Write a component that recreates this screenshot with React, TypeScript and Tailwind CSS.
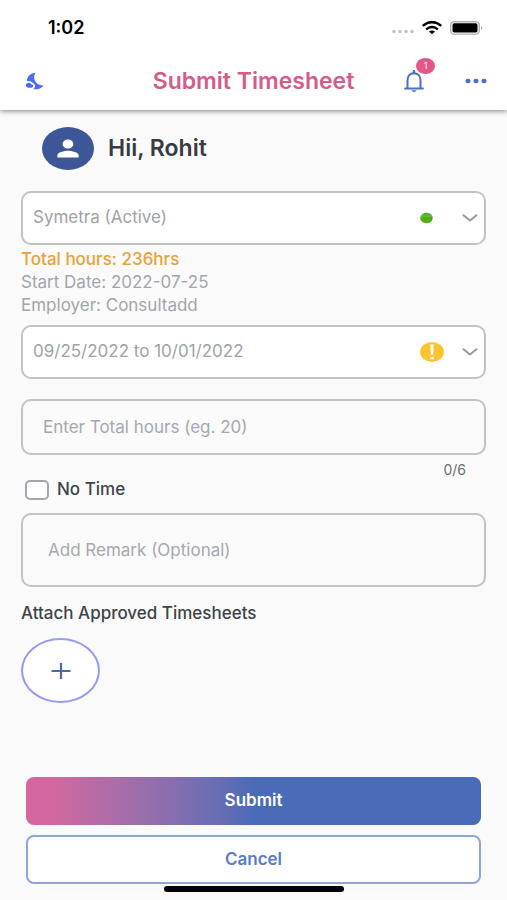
import { useState } from "react"
import { MdNightsStay, MdPerson } from "react-icons/md"

const MAX_HOURS_LENGTH = 6

const StatusBar = () => (
    <div className="flex h-[52px] items-center justify-between pt-1 pr-6 pl-12">
        <span className="text-lg font-semibold text-black">1:02</span>
        <div className="flex items-center gap-2">
            <svg viewBox="0 0 22 12" className="h-3 w-[22px]" fill="#c4c4c6">
                <circle cx="2" cy="9.5" r="1.8" />
                <circle cx="8" cy="9.5" r="1.8" />
                <circle cx="14" cy="9.5" r="1.8" />
                <circle cx="20" cy="9.5" r="1.8" />
            </svg>
            <svg viewBox="0 0 20 14" className="h-[14px] w-5" fill="none" stroke="#000" strokeWidth="2.4">
                <path d="M.8 5C6-.1 14-.1 19.200 5" />
                <path d="M4.2 8.300c3.400-3.100 8.200-3.100 11.600 0" />
                <path d="M7 10.500c1.800-1.500 4.200-1.500 6 0L10 13.200z" fill="#000" stroke="none" />
            </svg>
            <svg viewBox="0 0 33 14" className="h-[14px] w-[33px]">
                <rect x="0.700" y="0.700" width="28.600" height="12.400" rx="3.500" fill="none" stroke="#b0b0b0" strokeWidth="1.400" />
                <rect x="2.500" y="2.300" width="25" height="9.200" rx="1.800" fill="#000" />
                <path d="M31 5c1.400.4 1.400 3.200 0 3.600z" fill="#8a8a8a" />
            </svg>
        </div>
    </div>
)

const BellIcon = () => (
    <svg viewBox="0 0 22 22" className="h-[22px] w-[22px]" fill="none" stroke="#4a6fc4" strokeWidth="2">
        <path d="M4.500 18V10.500C4.500 6 7.200 3.200 11 3.200s6.500 2.800 6.500 7.300V18" />
        <path d="M2 18.500h18" strokeWidth="1.800" strokeLinecap="round" />
        <path d="M11 1v2" strokeWidth="2.400" strokeLinecap="round" />
        <path d="M8.400 20.200h5.200c-.5 1.200-1.400 1.700-2.600 1.700s-2.100-.5-2.600-1.700z" fill="#4a6fc4" stroke="none" />
    </svg>
)

const Header = () => (
    <header className="relative bg-white shadow-[0_1px_5px_rgba(0,0,0,0.5)]">
        <StatusBar />
        <div className="grid h-[58px] grid-cols-[1fr_auto_1fr] items-center px-5">
            <button type="button" aria-label="Dark mode" className="justify-self-start pl-[5px]">
                <MdNightsStay preserveAspectRatio="none" className="h-5 w-[22px] text-[#4d6bf0]" />
            </button>
            <h1 className="text-[23px] font-semibold text-[#d65a8c]">Submit Timesheet</h1>
            <div className="flex items-center gap-10 justify-self-end">
                <button type="button" aria-label="Notifications" className="relative">
                    <BellIcon />
                    <span className="absolute -top-3 left-[13px] flex h-4 w-[19px] items-center justify-center rounded-[50%] bg-[#e4568a] text-[9px] text-white">
                        1
                    </span>
                </button>
                <button type="button" aria-label="More">
                    <svg viewBox="0 0 22 6" className="h-[6px] w-[22px]" fill="#4a6fc4">
                        <ellipse cx="3" cy="3" rx="2.600" ry="2.200" />
                        <ellipse cx="11" cy="3" rx="2.600" ry="2.200" />
                        <ellipse cx="19" cy="3" rx="2.600" ry="2.200" />
                    </svg>
                </button>
            </div>
        </div>
    </header>
)

const Chevron = () => (
    <svg viewBox="0 0 16 8" className="h-2 w-4" fill="none" stroke="#999" strokeWidth="2" strokeLinecap="round" strokeLinejoin="round">
        <path d="M1.500 1.200 8 6.500l6.500-5.300" />
    </svg>
)

const ActiveDot = () => (
    <svg viewBox="0 0 14 12" className="h-3 w-[14px]">
        <defs>
            <linearGradient id="active-dot" x1="0" y1="0" x2="0" y2="1">
                <stop offset="0" stopColor="#3f9a14" />
                <stop offset="0.3" stopColor="#6dbb3e" />
                <stop offset="0.5" stopColor="#49ab12" />
                <stop offset="1" stopColor="#55b81a" />
            </linearGradient>
        </defs>
        <ellipse cx="6.500" cy="6" rx="6.300" ry="5.200" fill="url(#active-dot)" />
    </svg>
)

const WarningIcon = () => (
    <svg viewBox="0 0 24 20" className="h-5 w-6">
        <ellipse cx="12" cy="10" rx="12" ry="10" fill="#fcc52f" />
        <path d="M10.200 2.500h3.600l-.7 10.500h-2.200z" fill="#fff" />
        <ellipse cx="12" cy="16" rx="1.900" ry="1.600" fill="#fff" />
    </svg>
)

interface SelectBoxProps {
    label: string
    option: string
    icon: React.ReactNode
}

const SelectBox = ({ label, option, icon }: SelectBoxProps) => (
    <div className="relative">
        <select
            aria-label={label}
            className="block h-[54px] w-full appearance-none rounded-[10px] border-2 border-[#c0c2c6] bg-white px-[10px] text-[17px] text-[#9ea2a9] outline-none"
        >
            <option>{option}</option>
        </select>
        <div className="pointer-events-none absolute inset-y-0 right-2 flex items-center">
            <span className="w-[42px]">{icon}</span>
            <Chevron />
        </div>
    </div>
)

export default function App() {
    const [hours, setHours] = useState("")
    const [noTime, setNoTime] = useState(false)
    const [remark, setRemark] = useState("")

    return (
        <div className="flex min-h-screen flex-col bg-[#fafafb] font-['Inter',sans-serif]">
            <Header />

            <main className="flex flex-1 flex-col px-[21px] pt-[17px]">
                <div className="flex items-center gap-[14px] pl-[21px]">
                    <span className="flex h-[43px] w-[52px] items-center justify-center rounded-[50%] bg-[#3c5697]">
                        <MdPerson preserveAspectRatio="none" className="h-[27px] w-8 text-white" />
                    </span>
                    <h2 className="text-[23px] font-semibold text-[#383b43]">Hii, Rohit</h2>
                </div>

                <div className="mt-[21px]">
                    <SelectBox label="Project" option="Symetra (Active)" icon={<ActiveDot />} />
                </div>
                <div className="mt-[3px] mb-2 text-[17px] leading-[23px] text-[#a2a5ab]">
                    <p className="font-medium text-[#eba136]">Total hours: 236hrs</p>
                    <p>Start Date: 2022-07-25</p>
                    <p>Employer: Consultadd</p>
                </div>
                <SelectBox label="Week" option="09/25/2022 to 10/01/2022" icon={<WarningIcon />} />

                <input
                    type="text"
                    aria-label="Total hours"
                    placeholder="Enter Total hours (eg. 20)"
                    maxLength={MAX_HOURS_LENGTH}
                    value={hours}
                    onChange={(e) => setHours(e.target.value)}
                    className="mt-5 h-14 w-full rounded-[10px] border-2 border-[#c0c2c6] bg-transparent px-5 text-[17px] text-[#383b43] outline-none placeholder:text-[#a5a8af]"
                />
                <p className="mt-[5px] pr-5 text-right text-sm leading-5 text-[#6c6e72]">
                    {hours.length}/{MAX_HOURS_LENGTH}
                </p>

                <label className="flex h-5 items-center gap-2 self-start pl-1 text-[17px] font-medium text-[#404349]">
                    <input
                        type="checkbox"
                        checked={noTime}
                        onChange={(e) => setNoTime(e.target.checked)}
                        className="h-5 w-6 appearance-none rounded-[5px] border-2 border-[#a3a6b0] bg-white checked:bg-[#4a6bb8]"
                    />
                    No Time
                </label>

                <textarea
                    aria-label="Remark"
                    placeholder="Add Remark (Optional)"
                    rows={1}
                    value={remark}
                    onChange={(e) => setRemark(e.target.value)}
                    className="mt-[13px] h-[74px] w-full resize-none rounded-[10px] border-2 border-[#c0c2c6] bg-transparent px-[25px] py-[23px] text-[17px] leading-6 text-[#383b43] outline-none placeholder:text-[#a5a8af]"
                />

                <h3 className="mt-[14px] text-[17px] leading-6 font-medium text-[#404349]">Attach Approved Timesheets</h3>
                <button
                    type="button"
                    aria-label="Attach timesheet"
                    className="mt-[13px] flex h-[65px] w-[79px] items-center justify-center rounded-[50%] border-2 border-[#939cf2] bg-white"
                >
                    <svg viewBox="0 0 20 16" className="h-4 w-5" fill="none" stroke="#4a69ad" strokeWidth="2.200">
                        <path d="M.5 8h19M10 0v16" />
                    </svg>
                </button>

                <div className="mt-auto flex flex-col gap-[10px] px-[5px] pt-10">
                    <button
                        type="button"
                        className="h-12 rounded-lg bg-linear-to-r from-[#d4679f] from-5% to-[#4a6bb8] to-50% text-[17px] font-semibold text-white"
                    >
                        Submit
                    </button>
                    <button
                        type="button"
                        className="h-[49px] rounded-lg border-2 border-[#8ea5d8] bg-white text-[17px] font-semibold text-[#5a7cc8]"
                    >
                        Cancel
                    </button>
                </div>
            </main>

            <div className="mt-[2px] mb-2 h-[6px] w-[180px] self-center rounded-full bg-black" />
        </div>
    )
}
